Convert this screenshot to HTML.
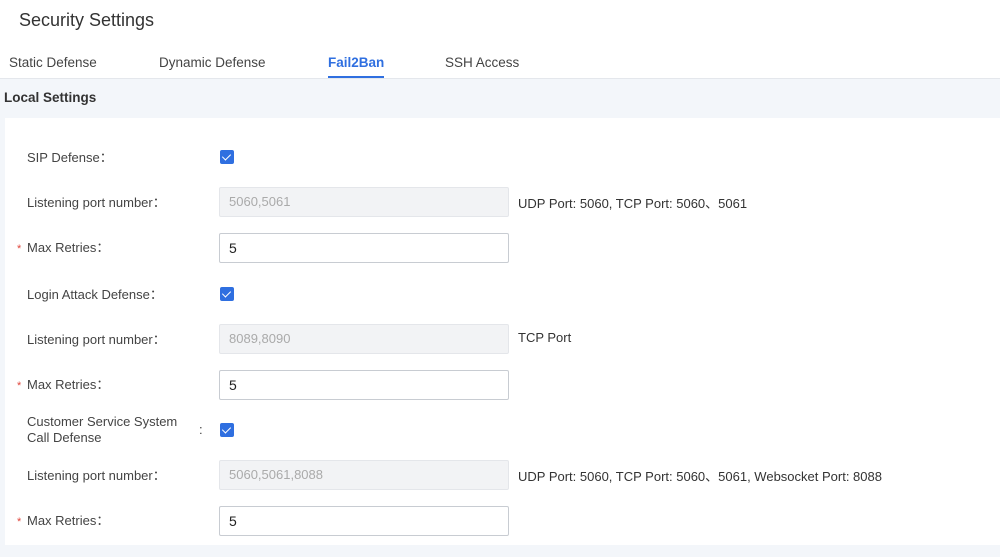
<!DOCTYPE html>
<html><head><meta charset="utf-8"><style>
body{margin:0;width:1000px;height:556px;background:#fff;font-family:"Liberation Sans",sans-serif;color:#333;position:relative;overflow:hidden}
.a{position:absolute;white-space:nowrap}
.title{left:19px;top:10px;font-size:18px;color:#333}
.tab{top:55px;font-size:13.5px;color:#444}
.bar{position:absolute;left:0;top:78px;width:1000px;height:478px;background:#f3f6fa;border-top:1px solid #e4e7ec}
.panel{position:absolute;left:5px;top:118px;width:995px;height:427px;background:#fff}
.lbl{left:27px;font-size:13px;color:#444}
.inp{position:absolute;left:219px;width:279px;height:28px;border:1px solid #c8ccd2;border-radius:2px;background:#fff;font-size:14px;line-height:28px;padding-left:9px;color:#222}
.dis{background:#f2f3f5;border-color:#e4e6ea;color:#aaa;font-size:13px}
.cb{position:absolute;left:220px;width:14px;height:14px;background:#2f6fe0;border-radius:2px}
.cb:after{content:"";position:absolute;left:4px;top:1.5px;width:4px;height:7px;border:solid #fff;border-width:0 1.6px 1.6px 0;transform:rotate(45deg)}
.note{left:518px;font-size:13px;color:#333}
.star{left:17px;color:#e0463c;font-size:11px}
</style></head><body>
<div class="a title">Security Settings</div>
<div class="a tab" style="left:9px">Static Defense</div>
<div class="a tab" style="left:159px">Dynamic Defense</div>
<div class="a tab" style="left:328px;color:#2f6fe0;font-weight:bold">Fail2Ban</div>
<div style="position:absolute;top:76px;width:56px;height:3px;background:#2f6fe0;left:328px"></div>
<div class="a tab" style="left:445px">SSH Access</div>
<div class="bar"></div>
<div class="a" style="left:4px;top:90px;font-size:13.5px;font-weight:bold;color:#333">Local Settings</div>
<div class="panel"></div>

<div class="a lbl" style="top:147px">SIP Defense：</div>
<div class="cb" style="top:150px"></div>
<div class="a lbl" style="top:192px">Listening port number：</div>
<div class="inp dis" style="top:187px">5060,5061</div>
<div class="a note" style="top:193px">UDP Port: 5060, TCP Port: 5060、5061</div>
<div class="a star" style="top:243px">*</div>
<div class="a lbl" style="top:237px">Max Retries：</div>
<div class="inp" style="top:233px">5</div>

<div class="a lbl" style="top:284px">Login Attack Defense：</div>
<div class="cb" style="top:287px"></div>
<div class="a lbl" style="top:329px">Listening port number：</div>
<div class="inp dis" style="top:324px">8089,8090</div>
<div class="a note" style="top:330px">TCP Port</div>
<div class="a star" style="top:380px">*</div>
<div class="a lbl" style="top:374px">Max Retries：</div>
<div class="inp" style="top:370px">5</div>

<div class="a lbl" style="top:414px;line-height:16px">Customer Service System<br>Call Defense</div>
<div class="a lbl" style="left:199px;top:422px">:</div>
<div class="cb" style="top:423px"></div>
<div class="a lbl" style="top:465px">Listening port number：</div>
<div class="inp dis" style="top:460px">5060,5061,8088</div>
<div class="a note" style="top:466px">UDP Port: 5060, TCP Port: 5060、5061, Websocket Port: 8088</div>
<div class="a star" style="top:516px">*</div>
<div class="a lbl" style="top:510px">Max Retries：</div>
<div class="inp" style="top:506px">5</div>
</body></html>
